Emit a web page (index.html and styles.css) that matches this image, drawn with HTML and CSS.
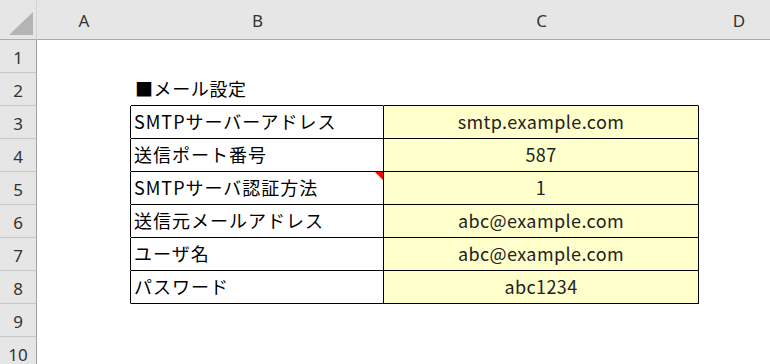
FILE: index.html
```html
<!DOCTYPE html>
<html lang="ja">
<head>
  <meta charset="UTF-8" />
  <meta name="viewport" content="width=device-width, initial-scale=1.0" />
  <title>メール設定</title>
  <link rel="stylesheet" href="styles.css">
</head>
<body>
  <div class="sheet">
    <!-- column headers -->
    <div class="corner"><span class="select-all"></span></div>
    <div class="col-head">A</div>
    <div class="col-head">B</div>
    <div class="col-head">C</div>
    <div class="col-head">D</div>

    <!-- row 1 -->
    <div class="row-head">1</div>
    <div class="cell"></div>
    <div class="cell"></div>
    <div class="cell"></div>
    <div class="cell"></div>

    <!-- row 2 -->
    <div class="row-head">2</div>
    <div class="cell"></div>
    <div class="cell title top-edge">■メール設定</div>
    <div class="cell top-edge"></div>
    <div class="cell"></div>

    <!-- rows 3-8: settings table -->
    <div class="row-head">3</div>
    <div class="cell left-edge"></div>
    <div class="cell key">SMTPサーバーアドレス</div>
    <div class="cell value">smtp.example.com</div>
    <div class="cell"></div>

    <div class="row-head">4</div>
    <div class="cell left-edge"></div>
    <div class="cell key">送信ポート番号</div>
    <div class="cell value">587</div>
    <div class="cell"></div>

    <div class="row-head">5</div>
    <div class="cell left-edge"></div>
    <div class="cell key has-note">SMTPサーバ認証方法<span class="note-mark"></span></div>
    <div class="cell value">1</div>
    <div class="cell"></div>

    <div class="row-head">6</div>
    <div class="cell left-edge"></div>
    <div class="cell key">送信元メールアドレス</div>
    <div class="cell value">abc@example.com</div>
    <div class="cell"></div>

    <div class="row-head">7</div>
    <div class="cell left-edge"></div>
    <div class="cell key">ユーザ名</div>
    <div class="cell value">abc@example.com</div>
    <div class="cell"></div>

    <div class="row-head">8</div>
    <div class="cell left-edge"></div>
    <div class="cell key">パスワード</div>
    <div class="cell value">abc1234</div>
    <div class="cell"></div>

    <div class="row-head">9</div>
    <div class="cell"></div>
    <div class="cell"></div>
    <div class="cell"></div>
    <div class="cell"></div>

    <div class="row-head">10</div>
    <div class="cell"></div>
    <div class="cell"></div>
    <div class="cell"></div>
    <div class="cell"></div>
  </div>
</body>
</html>
```

FILE: styles.css
```css
body {
  margin: 0;
  background: #ffffff;
  font-family: "Noto Sans CJK JP", "Noto Sans", sans-serif;
  color: #000000;
  overflow: hidden;
}

.sheet {
  display: grid;
  grid-template-columns: 37px 94px 253px 315px 80px;
  grid-template-rows: 40px repeat(10, 33px);
  font-size: 18px;
}

/* headers */
.corner {
  background: #e6e6e6;
  border-right: 1px solid #d4d4d4;
  border-bottom: 1px solid #ababab;
  display: flex;
  align-items: flex-end;
  justify-content: flex-end;
  padding: 0 3px 4px 0;
}

.select-all {
  width: 24px;
  height: 23px;
  background: #b4b4b4;
  clip-path: polygon(100% 0, 100% 100%, 0 100%);
}

.col-head {
  background: #e6e6e6;
  border-bottom: 1px solid #ababab;
  display: flex;
  align-items: center;
  justify-content: center;
  color: #333333;
  font-family: "Noto Sans", sans-serif;
  font-size: 17px;
  padding-top: 1px;
  position: relative;
}

.col-head::after {
  content: "";
  position: absolute;
  right: -1px;
  top: 8px;
  bottom: 0;
  width: 1px;
  background: #bdbdbd;
}

.row-head {
  background: #e6e6e6;
  border-right: 1px solid #9f9f9f;
  border-bottom: 1px solid #c8c8c8;
  display: flex;
  align-items: center;
  justify-content: center;
  color: #333333;
  font-family: "Noto Sans", sans-serif;
  font-size: 17px;
  padding-top: 2px;
}

/* cells */
.cell {
  border-right: 1px solid transparent;
  border-bottom: 1px solid transparent;
  display: flex;
  align-items: center;
  white-space: nowrap;
  padding: 0 3px 3px;
  min-width: 0;
}

.title {
  padding-left: 4px;
  align-items: flex-end;
  padding-bottom: 4px;
  letter-spacing: 0.6px;
}

.top-edge {
  border-bottom-color: #000000;
}

.left-edge {
  border-right-color: #000000;
}

.key,
.value {
  border-right-color: #000000;
  border-bottom-color: #000000;
}

.key {
  padding-left: 3px;
  letter-spacing: 1px;
}

.value {
  background: #ffffcc;
  justify-content: center;
  color: #222222;
  letter-spacing: 0.4px;
}

.has-note {
  position: relative;
}

.note-mark {
  position: absolute;
  top: 0;
  right: 0;
  width: 8px;
  height: 8px;
  background: #ff0000;
  clip-path: polygon(0 0, 100% 0, 100% 100%);
}
```
